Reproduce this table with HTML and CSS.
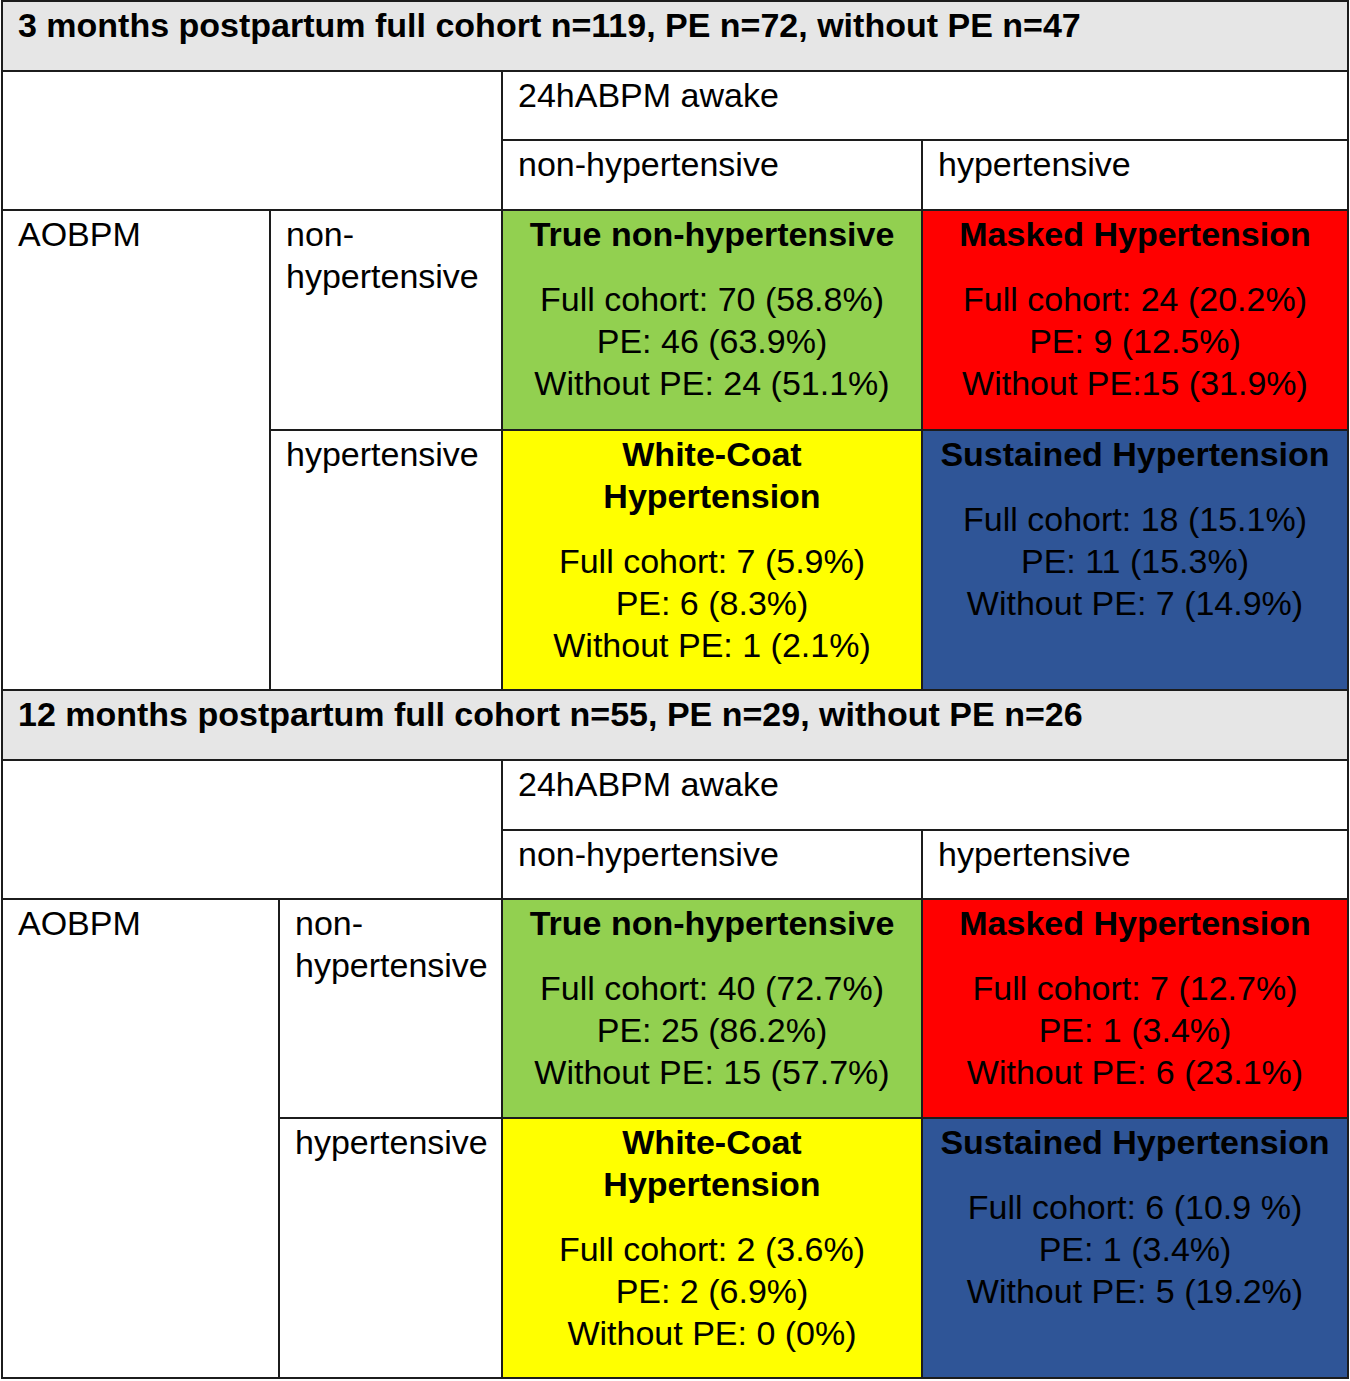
FILE: index.html
```html
<!DOCTYPE html>
<html lang="en">
<head>
<meta charset="utf-8">
<title>Blood pressure classification</title>
<link rel="stylesheet" href="styles.css">
</head>
<body>
<div class="frame">
  <section class="block block-3m">
    <div class="cell title">3 months postpartum full cohort n=119, PE n=72, without PE n=47</div>
    <div class="cell corner"></div>
    <div class="cell abpm">24hABPM awake</div>
    <div class="cell sub">non-hypertensive</div>
    <div class="cell sub">hypertensive</div>
    <div class="cell aobpm">AOBPM</div>
    <div class="cell label">non-hypertensive</div>
    <div class="cell data green">
      <p class="head">True non-hypertensive</p>
      <p>Full cohort: 70 (58.8%)<br>PE: 46 (63.9%)<br>Without PE: 24 (51.1%)</p>
    </div>
    <div class="cell data red">
      <p class="head">Masked Hypertension</p>
      <p>Full cohort: 24 (20.2%)<br>PE: 9 (12.5%)<br>Without PE:15 (31.9%)</p>
    </div>
    <div class="cell label">hypertensive</div>
    <div class="cell data yellow">
      <p class="head">White-Coat<br>Hypertension</p>
      <p>Full cohort: 7 (5.9%)<br>PE: 6 (8.3%)<br>Without PE: 1 (2.1%)</p>
    </div>
    <div class="cell data blue">
      <p class="head">Sustained Hypertension</p>
      <p>Full cohort: 18 (15.1%)<br>PE: 11 (15.3%)<br>Without PE: 7 (14.9%)</p>
    </div>
  </section>
  <section class="block block-12m">
    <div class="cell title">12 months postpartum full cohort n=55, PE n=29, without PE n=26</div>
    <div class="cell corner"></div>
    <div class="cell abpm">24hABPM awake</div>
    <div class="cell sub">non-hypertensive</div>
    <div class="cell sub">hypertensive</div>
    <div class="cell aobpm">AOBPM</div>
    <div class="cell label">non-hypertensive</div>
    <div class="cell data green">
      <p class="head">True non-hypertensive</p>
      <p>Full cohort: 40 (72.7%)<br>PE: 25 (86.2%)<br>Without PE: 15 (57.7%)</p>
    </div>
    <div class="cell data red">
      <p class="head">Masked Hypertension</p>
      <p>Full cohort: 7 (12.7%)<br>PE: 1 (3.4%)<br>Without PE: 6 (23.1%)</p>
    </div>
    <div class="cell label">hypertensive</div>
    <div class="cell data yellow">
      <p class="head">White-Coat<br>Hypertension</p>
      <p>Full cohort: 2 (3.6%)<br>PE: 2 (6.9%)<br>Without PE: 0 (0%)</p>
    </div>
    <div class="cell data blue">
      <p class="head">Sustained Hypertension</p>
      <p>Full cohort: 6 (10.9 %)<br>PE: 1 (3.4%)<br>Without PE: 5 (19.2%)</p>
    </div>
  </section>
</div>
</body>
</html>
```

FILE: styles.css
```css
html, body {
  margin: 0;
  padding: 0;
  background: #ffffff;
}

body {
  font-family: "Liberation Sans", Arial, sans-serif;
  font-size: 34px;
  line-height: 42px;
  color: #000000;
}

.frame {
  width: 1348px;
  margin-left: 1px;
  padding: 2px;
  box-sizing: border-box;
  background: #1c1c1c;
  display: flex;
  flex-direction: column;
  gap: 2px;
}

.block {
  display: grid;
  gap: 2px;
}

.block-3m {
  grid-template-columns: 266px 230px 418px 424px;
  grid-template-rows: 68px 67px 68px 218px 258px;
}

.block-12m {
  grid-template-columns: 275px 221px 418px 424px;
  grid-template-rows: 68px 68px 67px 217px 258px;
}

.cell {
  background: #ffffff;
  padding: 2px 15px 0 15px;
  overflow: visible;
}

.title {
  grid-column: 1 / -1;
  background: #e6e6e6;
  font-weight: bold;
}

.corner {
  grid-column: 1 / 3;
  grid-row: 2 / 4;
}

.abpm {
  grid-column: 3 / 5;
}

.aobpm {
  grid-column: 1;
  grid-row: 4 / 6;
}

.data {
  text-align: center;
  padding-left: 4px;
  padding-right: 4px;
}

.data p {
  margin: 0;
}

.data .head {
  font-weight: bold;
  margin-bottom: 23px;
}

.green { background: #92d050; }
.red { background: #ff0000; }
.yellow { background: #ffff00; }
.blue { background: #2f5597; }
```
